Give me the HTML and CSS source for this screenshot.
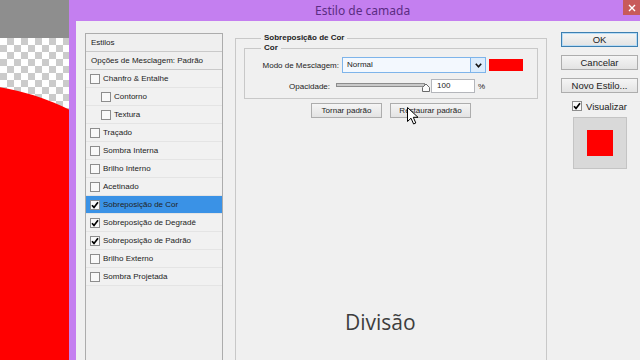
FILE: index.html
```html
<!DOCTYPE html>
<html lang="pt">
<head>
    <meta charset="UTF-8">
    <title>Estilo de camada</title>
    <link rel="stylesheet" href="styles.css">
</head>
<body>
    <div class="canvas">
        <div class="ruler"></div>
        <div class="checker"></div>
        <div class="blob"></div>
    </div>

    <div class="window">
        <div class="titlebar">
            <span class="title">Estilo de camada</span>
            <span class="close">
                <svg width="8" height="8" viewBox="0 0 8 8"><path d="M1 1 L7 7 M7 1 L1 7" stroke="#fff" stroke-width="1.4"/></svg>
            </span>
        </div>

        <div class="dialog">
            <!-- left list of effects -->
            <div class="styles">
                <div class="styles-head">Estilos</div>
                <div class="styles-head">Opções de Mesclagem: Padrão</div>
                <ul class="fx">
                    <li><span class="cb"></span>Chanfro &amp; Entalhe</li>
                    <li class="sub"><span class="cb"></span>Contorno</li>
                    <li class="sub"><span class="cb"></span>Textura</li>
                    <li><span class="cb"></span>Traçado</li>
                    <li><span class="cb"></span>Sombra Interna</li>
                    <li><span class="cb"></span>Brilho Interno</li>
                    <li><span class="cb"></span>Acetinado</li>
                    <li class="on"><span class="cb"><svg width="8" height="8" viewBox="0 0 8 8"><path d="M1 4.2 L3 6.4 L7 1.2" fill="none" stroke="#000" stroke-width="1.7"/></svg></span>Sobreposição de Cor</li>
                    <li><span class="cb"><svg width="8" height="8" viewBox="0 0 8 8"><path d="M1 4.2 L3 6.4 L7 1.2" fill="none" stroke="#000" stroke-width="1.7"/></svg></span>Sobreposição de Degradê</li>
                    <li><span class="cb"><svg width="8" height="8" viewBox="0 0 8 8"><path d="M1 4.2 L3 6.4 L7 1.2" fill="none" stroke="#000" stroke-width="1.7"/></svg></span>Sobreposição de Padrão</li>
                    <li><span class="cb"></span>Brilho Externo</li>
                    <li><span class="cb"></span>Sombra Projetada</li>
                </ul>
            </div>

            <!-- settings of the selected effect -->
            <fieldset class="group">
                <legend>Sobreposição de Cor</legend>
                <fieldset class="group inner">
                    <legend>Cor</legend>
                    <div class="row">
                        <span class="lbl">Modo de Mesclagem:</span>
                        <div class="select">
                            <span>Normal</span>
                            <span class="drop"><svg width="7" height="5" viewBox="0 0 7 5"><path d="M0.8 0.8 L3.5 3.8 L6.2 0.8" fill="none" stroke="#111" stroke-width="1.6"/></svg></span>
                        </div>
                        <span class="swatch"></span>
                    </div>
                    <div class="row row2">
                        <span class="lbl short">Opacidade:</span>
                        <svg class="slider" width="94" height="14" viewBox="0 0 94 14">
                            <rect x="0.5" y="4.5" width="88" height="3" fill="#c9c9c9" stroke="#8c8c8c"/>
                            <path d="M86.5 12.5 V8.5 L90 5 L93.5 8.5 V12.5 Z" fill="#fbfbfb" stroke="#6a6a6a"/>
                        </svg>
                        <span class="num">100</span>
                        <span class="pct">%</span>
                    </div>
                </fieldset>
                <div class="actions">
                    <button class="btn w1">Tornar padrão</button>
                    <button class="btn w2">Restaurar padrão</button>
                </div>
            </fieldset>

            <!-- dialog buttons -->
            <div class="side">
                <button class="btn big ok">OK</button>
                <button class="btn big">Cancelar</button>
                <button class="btn big">Novo Estilo...</button>
                <div class="view">
                    <span class="cb"><svg width="8" height="8" viewBox="0 0 8 8"><path d="M1 4.2 L3 6.4 L7 1.2" fill="none" stroke="#000" stroke-width="1.7"/></svg></span>
                    Visualizar
                </div>
                <div class="preview"><span></span></div>
            </div>
        </div>
    </div>

    <div class="caption">Divisão</div>

    <svg class="cursor" width="12" height="18" viewBox="0 0 12 18">
        <path d="M0.5 0.5 V14.5 L4 11.2 L6.6 17 L8.8 16 L6.3 10.3 H11 Z" fill="#fff" stroke="#000" stroke-width="1"/>
    </svg>
</body>
</html>
```

FILE: styles.css
```css
* {
    box-sizing: border-box;
}

body {
    margin: 0;
    width: 640px;
    height: 360px;
    overflow: hidden;
    display: flex;
    position: relative;
    background-color: #f0f0f0;
    font-family: "Liberation Sans", Arial, sans-serif;
    font-size: 8px;
    color: #222;
}

/* photoshop canvas behind the dialog */
.canvas {
    width: 69px;
    flex: none;
    display: flex;
    flex-direction: column;
    position: relative;
    overflow: hidden;
}

.ruler {
    height: 38px;
    background-color: #8e8e8e;
}

.checker {
    flex: 1;
    background-color: #fff;
    background-image: conic-gradient(#cbcbcb 25%, #fff 0 50%, #cbcbcb 0 75%, #fff 0);
    background-size: 14px 14px;
}

.blob {
    position: absolute;
    left: -286px;
    top: 84px;
    width: 492px;
    height: 492px;
    border-radius: 50%;
    background-color: #ff0000;
}

/* dialog window */
.window {
    flex: 1;
    min-width: 0;
    display: flex;
    flex-direction: column;
    background-color: #c47ff0;
}

.titlebar {
    height: 21px;
    flex: none;
    display: flex;
    align-items: flex-start;
}

.title {
    margin-left: 246px;
    margin-top: 2px;
    font-family: "Noto Sans", sans-serif;
    font-size: 12px;
    color: #5b2c83;
}

.close {
    margin-left: auto;
    width: 17px;
    height: 15px;
    background-color: #c85a5a;
    display: flex;
    align-items: center;
    justify-content: center;
}

.dialog {
    flex: 1;
    min-height: 0;
    margin-left: 7px;
    padding: 12px 0 0 9px;
    display: flex;
    background-color: #f0f0f0;
}

/* effects list */
.styles {
    width: 138px;
    flex: none;
    border: 1px solid #acacac;
    border-bottom: none;
    background-color: #efefef;
}

.styles-head {
    height: 18px;
    line-height: 17px;
    padding-left: 5px;
    border-bottom: 1px solid #c9c9c9;
}

.fx {
    list-style: none;
    margin: 0;
    padding: 0;
}

.fx li {
    height: 18px;
    display: flex;
    align-items: center;
    padding-left: 4px;
    border-bottom: 1px solid #e4e4e4;
    background-color: #f1f1f1;
}

.fx li.sub {
    padding-left: 15px;
}

.fx li.on {
    background-color: #3a92e6;
}

.cb {
    width: 10px;
    height: 10px;
    flex: none;
    margin-right: 3px;
    border: 1px solid #8d8d8d;
    background-color: #f9f9f9;
    display: flex;
    align-items: center;
    justify-content: center;
}

/* group boxes */
.group {
    width: 312px;
    flex: none;
    min-width: 0;
    margin: 0 0 0 12px;
    padding: 0 8px;
    border: 1px solid #c8c8c8;
    border-bottom: none;
}

.group legend {
    margin-left: 17px;
    padding: 0 3px;
    line-height: 10px;
    font-weight: bold;
}

.group.inner {
    width: auto;
    margin: 0;
    padding: 4px 0 5px 0;
    border-bottom: 1px solid #c8c8c8;
}

.group.inner legend {
    margin-left: 16px;
}

.row {
    display: flex;
    align-items: center;
    height: 16px;
}

.row2 {
    height: 14px;
    margin-top: 6px;
}

.lbl {
    width: 94px;
    margin-right: 3px;
    text-align: right;
}

.lbl.short {
    width: 85px;
    margin-right: 6px;
}

.select {
    width: 144px;
    height: 16px;
    display: flex;
    border: 1px solid #7eb4ea;
    background-color: #f3f8fe;
}

.select span {
    flex: 1;
    padding-left: 4px;
    line-height: 14px;
}

.select .drop {
    flex: none;
    width: 15px;
    padding: 0;
    border-left: 1px solid #7eb4ea;
    background-color: #dcecfc;
    display: flex;
    align-items: center;
    justify-content: center;
}

.swatch {
    width: 34px;
    height: 12px;
    margin-left: 3px;
    background-color: #ff0000;
}

.slider {
    flex: none;
}

.num {
    width: 44px;
    height: 14px;
    margin-left: 1px;
    padding-left: 5px;
    line-height: 12px;
    border: 1px solid #b4b6bb;
    background-color: #fff;
}

.pct {
    margin-left: 3px;
}

.actions {
    display: flex;
    justify-content: center;
    gap: 8px;
    margin-top: 4px;
}

.btn {
    height: 15px;
    padding: 0;
    font-family: inherit;
    font-size: 8px;
    color: #222;
    border: 1px solid #adadad;
    background: linear-gradient(#f5f5f5, #e3e3e3);
}

.w1 {
    width: 71px;
}

.w2 {
    width: 81px;
}

/* right column */
.side {
    width: 77px;
    flex: none;
    margin-left: 14px;
    margin-top: -1px;
    display: flex;
    flex-direction: column;
    align-items: center;
}

.btn.big {
    width: 77px;
    margin-bottom: 8px;
    font-size: 9.5px;
}

.btn.ok {
    border-color: #3c7fb1;
    box-shadow: inset 0 0 0 1px #b9dcf5;
}

.view {
    height: 10px;
    display: flex;
    align-items: center;
    font-size: 9.5px;
}

.view .cb {
    margin-right: 4px;
}

.preview {
    width: 54px;
    height: 52px;
    margin-top: 6px;
    border: 1px solid #c4c4c4;
    background-color: #d9d9d9;
    display: flex;
    align-items: center;
    justify-content: center;
}

.preview span {
    width: 26px;
    height: 26px;
    background-color: #ff0000;
}

/* video subtitle and mouse pointer over the dialog */
.caption {
    position: absolute;
    left: 345px;
    top: 308px;
    font-family: "Open Sans", sans-serif;
    font-size: 21px;
    line-height: 28px;
    color: #3d3d3d;
}

.cursor {
    position: absolute;
    left: 407px;
    top: 107px;
}
```
